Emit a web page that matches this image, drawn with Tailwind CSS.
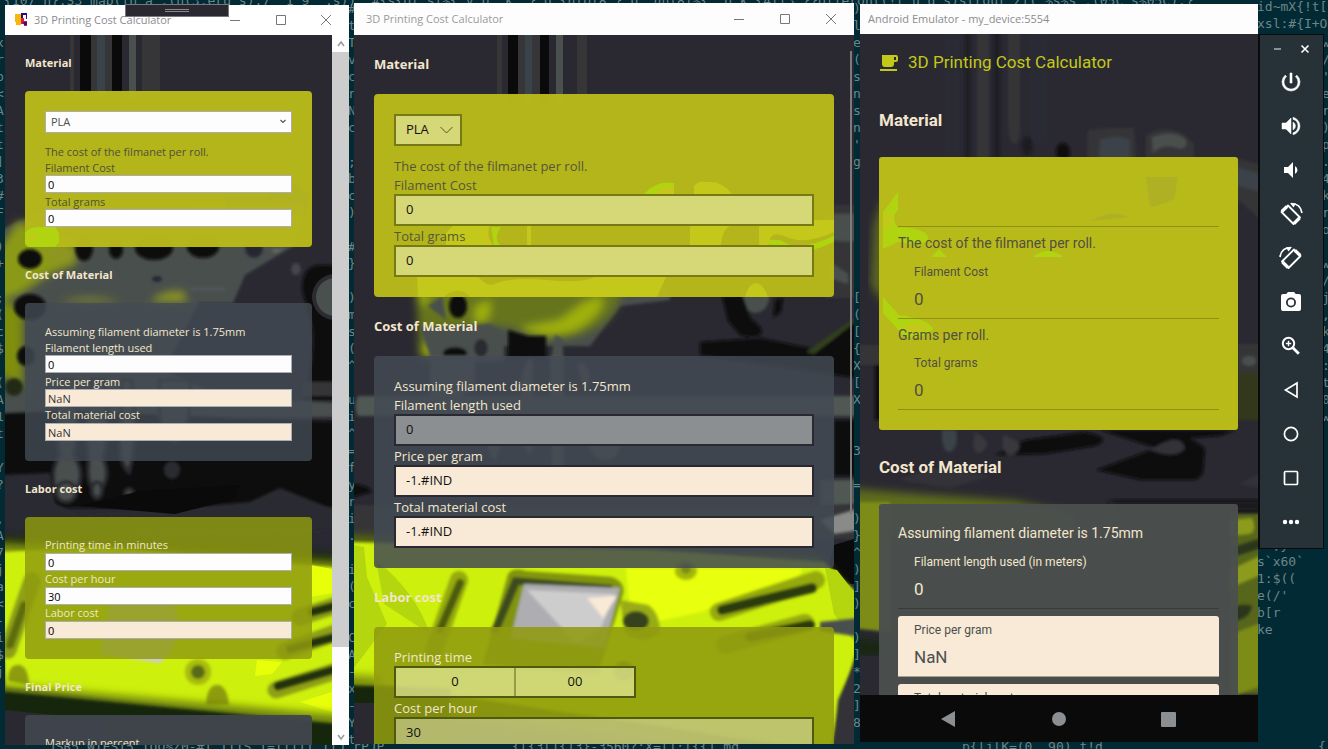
<!DOCTYPE html>
<html lang="en">
<head>
<meta charset="utf-8">
<meta name="viewport" content="width=device-width, initial-scale=1">
<title>3D Printing Cost Calculator</title>
<script src="https://cdn.jsdelivr.net/npm/@tailwindcss/browser@4"></script>
</head>
<body class="bg-[#01252f]">
<div class="relative h-screen w-full overflow-hidden bg-[#012a35] font-['Open_Sans','Noto_Sans',sans-serif]">

  <!-- Terminal text behind the windows -->
  <div aria-hidden="true" class="text-[13px] leading-[17px] text-[#6d8587] [&>pre]:font-['DejaVu_Sans_Mono',monospace]">
    <pre class="absolute -top-2 left-1">{107 n}:S3 map(fn a :(n(3:erd s):7" 1 9 ":s))  #{s{of sf%{ y b  k  } g {nfof8"} b  nnf8f%{  b k {4ff3 }}offeront(!t u d s)strout Zf("%s%s",(05C s%05C):}</pre>
    <pre class="absolute -top-[2px] left-[1257px]">id~mX{!t[
xsl:#{I+O</pre>
    <pre class="absolute top-[34px] -left-1">x
r
b
&lt;
A
t
t
]
3
#
F

)
+

;
(
c
$

(
A
1
t

Y
?

,
A
7
j
a
&lt;
-
i
$
j</pre>
    <pre class="absolute top-0 left-[348px]">#
t
T
v
c
r
N
c

;
b
c
)

#
}

)
m
s
(
^

u
i
^
=
f
y
r
i
.

i
(
c

C
A
-
x
-
Y
t

;
)
^</pre>
    <pre class="absolute top-0 left-[853px]">)
l
e
(
s
n
s
n
'
g







[
(
[
{
X
[
X


3

=

)
}
^
)
]
)

)
]
*
2
]
8</pre>
    <pre class="absolute top-[34px] left-[1322px]">w
/
'
e
r
)
p
.
4
k
r
o

w
/
j
,
k
4
:
t
0
w</pre>
    <pre class="absolute top-[536px] left-[1257px]">  ,y
s`x60`
1:$((
e(/'
b[r
ke</pre>
    <pre class="absolute top-[738px] left-10">.JSR5.WIESI5 TUO%Z0-#I.IIIS I=IIIII.IIJ.rPJP</pre>
    <pre class="absolute top-[738px] left-[512px]">{[{3[]{]3}-3560?:X=[];[{{].md</pre>
    <pre class="absolute top-[738px] left-[962px]">p{[j[K=(0..90).t!d</pre>
    <pre class="absolute top-[738px] left-[1318px]">{</pre>
  </div>

  <!-- Window 1: desktop (WPF) -->
  <section class="absolute top-[5px] left-[5px] flex h-[740px] w-[344px] flex-col bg-white">
    <header class="flex h-[30px] shrink-0 items-center pl-[10px] text-[#8b8b8f]">
      <svg class="mr-[6px] h-[14px] w-[13px]" viewBox="0 0 13 14"><path d="M0 1h6v11H1V9H0z" fill="#f8b70e"/><path d="M6 0h6v6h-1V2H8v3H6z" fill="#2a0a8a"/><path d="M6 5h3v3h3v5H9v-2H6z" fill="#d81b4a"/><path d="M8 9h4v3H9z" fill="#3a1080"/></svg>
      <h1 class="flex-1 text-[11px] whitespace-nowrap">3D Printing Cost Calculator</h1>
      <button aria-label="Minimize" class="grid h-[30px] w-[46px] place-items-center"><svg class="h-3 w-3" viewBox="0 0 12 12" stroke="#777" fill="none"><path d="M1 6.500h10"/></svg></button>
      <button aria-label="Maximize" class="grid h-[30px] w-[45px] place-items-center"><svg class="h-3 w-3" viewBox="0 0 12 12" stroke="#777" fill="none"><path d="M1.500 1.500h9v9h-9z"/></svg></button>
      <button aria-label="Close" class="grid h-[30px] w-[46px] place-items-center"><svg class="h-3 w-3" viewBox="0 0 12 12" stroke="#777" fill="none"><path d="M1 1l10 10M11 1L1 11"/></svg></button>
    </header>
    <div class="absolute -top-px left-[120px] flex h-[13px] w-[104px] flex-col items-center justify-center gap-px border border-[#77777a] bg-[#2a2932]"><span class="h-px w-6 bg-[#8a8a8a]"></span><span class="h-px w-6 bg-[#8a8a8a]"></span></div>
    <div class="flex min-h-0 flex-1">
      <main class="relative min-w-0 flex-1 overflow-hidden bg-[#2a2932]">
        <svg class="absolute inset-0 h-full w-full" viewBox="5 35 327 710" preserveAspectRatio="xMidYMin slice" aria-hidden="true">
          <defs><filter id="b1" x="-20%" y="-20%" width="140%" height="140%"><feGaussianBlur stdDeviation="1.500"/></filter><filter id="b3" x="-20%" y="-50%" width="140%" height="200%"><feGaussianBlur stdDeviation="4"/></filter></defs>
          <path fill="#363638" d="M70 35h4v66h-4zM142 35h18v66h-18zM91 35h21v66H91z"/>
          <path fill="#0a0a0a" d="M80 35h11v56H80zM112 35h10v56h-10z"/>
          <path fill="#3a424a" d="M97 35h8v60h-8z"/><path fill="#4a504d" d="M129 35h7v66h-7z"/>
          <g filter="url(#b1)">
            <path fill="#4a504d" d="M0 230l40-18 265-10-10 43-50 30-12 28H0z"/>
            <path fill="#4a504d" d="M0 300h200l-36 70 60 28 115 5v14H0z"/>
            <path fill="#0a0a0a" d="M0 413l65-3 275 12v86H0z"/>
            <path fill="#0a0a0a" d="M302 290q0-26 20-25h20v135h-38q12-50 8-75z"/>
            <path fill="#363638" d="M302 382h36v14h-36z"/>
          </g>
          <g filter="url(#b3)">
            <path fill="#8b9a12" d="M-5 255l23-34 60 25-2 18-26 10-30 20-25 8z"/>
            <path fill="#7f8e10" d="M-5 295l28 15v78L-5 372z"/>
            <path fill="#8e9624" d="M46 247h30v12q-17 8-30 0zM60 302q30-8 60 0zM150 302q15-14 34-10l3 10z"/>
          </g>
          <g filter="url(#b1)" fill="#0a0a0a">
            <ellipse cx="30" cy="259" rx="12" ry="10"/><ellipse cx="84" cy="248" rx="9" ry="13"/><ellipse cx="116" cy="249" rx="7" ry="10"/><ellipse cx="154" cy="248" rx="19" ry="12"/><ellipse cx="203" cy="247" rx="16" ry="11"/><ellipse cx="254" cy="248" rx="9" ry="10" fill="#262831"/>
            <ellipse cx="30" cy="307" rx="16" ry="13"/><ellipse cx="26" cy="356" rx="9" ry="10"/>
            <ellipse cx="14" cy="387" rx="9" ry="9" fill="#242a18"/>
            <ellipse cx="157" cy="279" rx="5" ry="3" fill="#262831"/><ellipse cx="296" cy="269" rx="5" ry="6" fill="#45454b"/>
            <path fill="#6a6a6c" d="M270 250l14-2-8 5z"/><path fill="#525a63" d="M190 288h35v2h-35z"/>
          </g>
          <circle cx="335" cy="297" r="23" fill="#2c2b32"/><circle cx="335" cy="297" r="19" fill="#4a504d"/>
          <g filter="url(#b1)" fill="#4a504d" stroke="#2c2b32" stroke-width="4">
            <path d="M60 380h15q5 50-2 75 12 15 5 32-10 22-22 5-7-20 4-37-7-30 0-75zM92 380h12q6 50-1 78 9 20-4 33-14-2-10-33-5-30 3-78zM122 380h10q6 60-3 92-10-10-9-30zM160 380h30q2 50-15 62-20-10-15-62z"/>
            <ellipse cx="172" cy="470" rx="6" ry="7" fill="#2c2b32"/><circle cx="129" cy="493" r="4"/><circle cx="66" cy="492" r="10"/><ellipse cx="97" cy="490" rx="5" ry="8"/>
          </g>
          <path filter="url(#b1)" fill="#2c2b32" d="M0 475l50-2 5 30 25 14 170-15 30-14 55 22v20l-335 10z"/><path fill="#0a0a0a" d="M80 506l60-15 100-6-5 14-60 15z"/>
          <path filter="url(#b3)" fill="#1a2a0c" d="M-8 536l350 18v20L-8 552z"/>
          <path filter="url(#b3)" fill="#7f930e" d="M-8 542l350 20v40L-8 562z"/>
          <path filter="url(#b1)" fill="#cdf00a" d="M0 552l100-5 240 21v156L5 688z"/>
          <path fill="#e8ff0a" d="M310 565l22 4v24l-22 4zM257 660l25 2-10 12-17 2zM300 702l32-10v20z"/>
          <g filter="url(#b1)">
            <path fill="#cdcdcd" d="M110 600h60q15 20 2 50l-12 13-60-9z"/>
            <path fill="none" stroke="#8fa016" stroke-width="17" stroke-linecap="round" d="M32 581L8 650M300 617l40-13M285 651l50-18M276 690l60-19"/>
            <path fill="none" stroke="#20300f" stroke-width="9" stroke-linecap="round" d="M312 612l30-8M290 649l45-12M278 686l55-16"/>
            <path fill="none" stroke="#5c6d10" stroke-width="8" stroke-linecap="round" d="M24 605L10 645"/>
            <circle cx="198" cy="672" r="13" fill="#a8bc0e"/><circle cx="198" cy="672" r="7" fill="#586a18"/>
            <path fill="#8c9c10" d="M206 705q1-20 11-20t12 20zM8 681q0-16 10-16t11 20z"/>
          </g>
          <path filter="url(#b3)" fill="#70840d" d="M-8 684l350 31v15H-8z"/>
          <path filter="url(#b1)" fill="#17260c" d="M0 691l340 33v30H0z"/>
          <path fill="#2a2932" d="M5 710l100 10v30H5z"/>
        </svg>
        <form class="relative px-5 text-[11px] text-[#f3e6cd]">
          <h2 class="flex h-14 items-center font-bold">Material</h2>
          <div class="relative isolate flex flex-col rounded-[4px] bg-[#b8ba1a]/97 p-5 text-[#505039]">
            <svg class="absolute bottom-0 left-0 -z-10 h-20 w-full" viewBox="0 0 287 80" preserveAspectRatio="none" aria-hidden="true"><path fill="#b0d40f" d="M0 66q4-6 14-6h16q5 4 4 15l-4 5H4l-4-4z"/><path fill="#c3c81a" d="M4 70q5-4 8 0-3 6-8 5z"/><path fill="#afb024" d="M200 30h40q30-25 45 0l-5 18h-80z" opacity=".5"/></svg>
            <div class="relative mb-[10px]">
              <select aria-label="Material" class="block h-[22px] w-full appearance-none border border-[#abadb3] bg-[#fdfdfd] px-[5px] text-[#4a504d]"><option>PLA</option></select>
              <svg class="absolute top-[8px] right-[6px] h-[5px] w-[6px]" viewBox="0 0 6 5" fill="none" stroke="#555" stroke-width="1.200"><path d="M.500 1L3 3.500 5.500 1"/></svg>
            </div>
            <p class="h-4 leading-[18px]">The cost of the filmanet per roll.</p>
            <label for="a1" class="h-4 leading-[18px]">Filament Cost</label>
            <input id="a1" value="0" class="h-[18px] w-full border border-[#abadb3] bg-[#fdfdfd] px-[2px] text-black">
            <label for="a2" class="h-4 leading-[18px]">Total grams</label>
            <input id="a2" value="0" class="h-[18px] w-full border border-[#abadb3] bg-[#fdfdfd] px-[2px] text-black">
          </div>
          <h2 class="flex h-14 items-center font-bold">Cost of Material</h2>
          <div class="flex flex-col rounded-[4px] bg-[#444b54]/80 p-5">
            <p class="h-4 leading-[18px]">Assuming filament diameter is 1.75mm</p>
            <label for="a3" class="h-4 leading-[18px]">Filament length used</label>
            <input id="a3" value="0" class="h-[18px] w-full border border-[#abadb3] bg-[#fdfdfd] px-[2px] text-black">
            <label for="a4" class="h-4 leading-[18px]">Price per gram</label>
            <input id="a4" value="NaN" readonly class="h-[18px] w-full border border-[#abadb3] bg-[#f9e9d7] px-[2px] text-[#333]">
            <label for="a5" class="h-4 leading-4">Total material cost</label>
            <input id="a5" value="NaN" readonly class="h-[18px] w-full border border-[#abadb3] bg-[#f9e9d7] px-[2px] text-[#333]">
          </div>
          <h2 class="flex h-14 items-center font-bold">Labor cost</h2>
          <div class="flex flex-col rounded-[4px] bg-[#8f9b10]/84 p-5">
            <label for="a6" class="h-4 leading-4">Printing time in minutes</label>
            <input id="a6" value="0" class="h-[18px] w-full border border-[#abadb3] bg-[#fdfdfd] px-[2px] text-black">
            <label for="a7" class="h-4 leading-4">Cost per hour</label>
            <input id="a7" value="30" class="h-[18px] w-full border border-[#abadb3] bg-[#fdfdfd] px-[2px] text-black">
            <label for="a8" class="h-4 leading-4">Labor cost</label>
            <input id="a8" value="0" readonly class="h-[18px] w-full border border-[#abadb3] bg-[#f9e9d7] px-[2px] text-black">
          </div>
          <h2 class="flex h-14 items-center font-bold">Final Price</h2>
          <div class="flex flex-col rounded-[4px] bg-[#40464e]/95 p-5">
            <label for="a9" class="h-4 leading-4">Markup in percent</label>
            <input id="a9" value="0" class="h-[18px] w-full border border-[#abadb3] bg-[#fdfdfd] px-[2px] text-black">
          </div>
        </form>
      </main>
      <div aria-hidden="true" class="flex w-[17px] flex-col items-center bg-[#fdfdfd]">
        <svg class="h-[17px] w-[8px]" viewBox="0 0 8 17" fill="none" stroke="#999" stroke-width="1.500"><path d="M1 11l3-4 3 4"/></svg>
        <div class="h-[595px] w-full bg-[#cdcdcd]"></div><div class="flex-1"></div>
        <svg class="h-[17px] w-[8px]" viewBox="0 0 8 17" fill="none" stroke="#999" stroke-width="1.500"><path d="M1 7l3 4 3-4"/></svg>
      </div>
    </div>
  </section>

  <!-- Window 2: desktop (UWP) -->
  <section class="absolute top-[3px] left-[354px] flex h-[741px] w-[500px] flex-col bg-[#2a2932] text-[13px]">
    <header class="flex h-8 shrink-0 items-center bg-[#fdfdfd] pl-3 text-[#9a9a9a]">
      <h1 class="flex-1 text-[11px]">3D Printing Cost Calculator</h1>
      <button aria-label="Minimize" class="grid h-8 w-[46px] place-items-center"><svg class="h-3 w-3" viewBox="0 0 12 12" stroke="#777" fill="none"><path d="M1 6.500h10"/></svg></button>
      <button aria-label="Maximize" class="grid h-8 w-[46px] place-items-center"><svg class="h-3 w-3" viewBox="0 0 12 12" stroke="#777" fill="none"><path d="M1.500 1.500h9v9h-9z"/></svg></button>
      <button aria-label="Close" class="grid h-8 w-[46px] place-items-center"><svg class="h-3 w-3" viewBox="0 0 12 12" stroke="#777" fill="none"><path d="M1 1l10 10M11 1L1 11"/></svg></button>
    </header>
    <main class="relative min-h-0 flex-1 overflow-hidden">
      <svg class="absolute inset-0 h-full w-full" viewBox="354 35 500 709" preserveAspectRatio="xMidYMin slice" aria-hidden="true">
        <path fill="#363638" d="M497 35h5v66h-5zM577 35h10v66h-10zM518 35h22v66h-22z"/>
        <path fill="#0a0a0a" d="M508 35h10v66h-10zM540 35h9v66h-9z"/><path fill="#3a424a" d="M525 35h7v66h-7z"/><path fill="#4a504d" d="M556 35h7v66h-7z"/>
        <g filter="url(#b1)">
          <path fill="#363638" d="M825 205h35v93h-35z"/><path fill="#4a504d" d="M828 214h35v24q-15 7-35 0zM830 262l18 12v10l-18-6z"/>
          <path fill="#4a504d" d="M440 290h230v10l-50 6-30 40H440z"/>
        </g>
        <g filter="url(#b3)">
          <path fill="#66741a" d="M416 280h210l-10 28q-15 24-50 30-30 2-48-8-30-8-50-2l-35 2 5 28h-18z"/>
          <path fill="#9fb00c" d="M520 328l40-8 24-18 18-6q5 16-25 34-35 12-57-2zM475 306l16-6-2 18-14 8zM416 294h14l-6 14zM422 345l16-2-2 13h-12z"/>
        </g>
        <g filter="url(#b1)" fill="#0a0a0a">
          <path fill="#4a504d" d="M420 328l70-4 14 8v30h-72zM555 335l8 4v20h-12zM740 290h30q0 22-15 23-13-2-15-23zM428 306l14-10 4 24z"/>
          <ellipse cx="458" cy="306" rx="9" ry="12"/><ellipse cx="455" cy="353" rx="12" ry="6"/><path d="M508 330l20 6h18v22h-38zM722 296l20-2 9 25q15 10 9 16-6 4-20 0l-12-14zM775 300l8-2-2 14-8 6zM700 342l60-4 50 10 20-6 32-28v65l-162-24zM834 420h28v56h-28z"/>
          <path fill="#33401a" d="M806 352l52-36v4l-44 34z"/>
          <ellipse cx="481" cy="348" rx="7" ry="9" fill="#2c2b32"/>
          <path fill="#505853" d="M358 396h504v20H358q-5-10 0-20zM430 356h45v30q-20 20-45 10zM521 380q5-25 12-20v90q-4 10-12-10zM550 356h14v120h-12zM578 362q16 4 10 26-8-2-10-26zM487 420h15q0 30-7 40-10-4-8-40zM588 440h32q0 22-15 20-14 0-17-20zM820 480h40v24l-40 4z"/>
          <path d="M350 484q18 0 22 8l-22 6z"/>
        </g>
        <path filter="url(#b1)" fill="#363638" d="M350 505h512v34H350z"/><path filter="url(#b1)" fill="#8a8a88" d="M820 520l40-12v22l-26 4z"/>
        <path fill="#0a0a0a" d="M834 545l20-6v45h-30z"/>
        <path filter="url(#b3)" fill="#58680f" d="M344 535l164 5 310 16 48 54-22 130-150 10-350-50z"/>
        <path filter="url(#b1)" fill="#cdf00a" d="M350 542l304 8 170 12 32 30v60l-26 100-480-72z"/>
        <path fill="#b4d60e" d="M354 545l10 2 3 30 20 47-33 44zM376 560q40 32 54 74l-46-30zM825 568l12 2 17 22v50l-20-28z"/>
        <path filter="url(#b1)" fill="#e8ff0a" d="M626 568h175q6 14-40 22l-60 22-70 15z"/>
        <g filter="url(#b1)">
          <path fill="none" stroke="#96aa10" stroke-width="18" stroke-linecap="round" d="M459 580l-25 70M719 612l97-32M725 645l80-22"/>
          <path fill="none" stroke="#2b3a10" stroke-width="10" stroke-linecap="round" d="M722 610l90-22M750 637l60-12"/>
          <path fill="none" stroke="#4c5c10" stroke-width="8" stroke-linecap="round" d="M460 583l-20 47"/>
          <path fill="#82940f" d="M508 574q5-7 18-3l86 6q14 5 11 17l-25 80-115-10z"/>
          <path fill="#3e4c1a" d="M513 577l100 8-4 8-90-8-20 47-9 1z"/>
          <path fill="#aeaeb2" d="M524 584l96 4-16 60-93-10z"/>
          <path fill="#cdcdcd" d="M527 590l88 4-14 34-25 15z"/><path fill="#f9e9d7" d="M587 598l30-2-14 22z"/>
          <path fill="#99ac12" d="M620 600l28 5q12 8 12 28-20 14-35 0z"/><ellipse cx="636" cy="621" rx="13" ry="10" fill="#34431c"/>
          <ellipse cx="686" cy="571" rx="11" ry="9" fill="#a4b80e"/><ellipse cx="686" cy="569" rx="5" ry="5" fill="#7c8c14"/>
          <ellipse cx="624" cy="671" rx="10" ry="10" fill="#6c7c14"/>
          <path fill="#4a504d" d="M820 622l40-4v19l-40-6z"/><path fill="#303038" d="M838 700l24-55v110h-30z"/>
        </g>
        <path filter="url(#b3)" fill="#82960d" d="M340 674l40 2v20h-40z"/><path filter="url(#b1)" fill="#17260c" d="M346 685l104 4v80H346z"/><path fill="#2a2932" d="M354 703h22v45h-22z"/>
      </svg>
      <form class="relative px-5 text-[#f3e6cd]">
        <h2 class="flex h-[59px] items-center font-bold">Material</h2>
        <div class="relative isolate flex flex-col rounded-[4px] bg-[#b8ba1a]/97 p-5 text-[#55563a]">
          <svg class="absolute bottom-0 left-0 -z-10 h-[120px] w-full" viewBox="0 0 460 120" preserveAspectRatio="none" aria-hidden="true"><path fill="#b0d40f" d="M270 17q12-14 30-11v12zM385 64q20-3 25 1 15 10 50-6v6q-40 18-55 5zM117 50h10q-8 12-1 18h-6z"/><path fill="#c3c81a" d="M72 56q8-10 15-10h30q-6 12 2 22h34V48h4v20H72zM280 17q8-10 20-8v8zM320 17V9q5-6 12-4 15-2 26 12zM316 46h46q-14 4-15 22h-31zM385 43h75v12q-30 14-50 4-15-6-15 9h-10zM43 98h60q10 14 20 8 15-6 50-3 40 4 50-5h70l-10 22H44zM371 120q4-14 11-14t12 14z"/><path fill="#b8ba1a" d="M70 120q10-10 22-4l4 4z"/></svg>
          <div class="relative mb-[10px] w-[68px]">
            <select aria-label="Material" class="block h-8 w-full appearance-none border-2 border-[#757b14] bg-[#d6d776] px-[10px] text-[#111]"><option>PLA</option></select>
            <svg class="absolute top-3 right-[9px] h-2 w-[13px]" viewBox="0 0 13 8" fill="none" stroke="#55581c" stroke-width="1"><path d="M.500 1l6 6 6-6"/></svg>
          </div>
          <p class="h-[19px] leading-[21px]">The cost of the filmanet per roll.</p>
          <label for="b1i" class="h-[19px] leading-[21px]">Filament Cost</label>
          <input id="b1i" value="0" class="h-8 w-full border-2 border-[#757b14] bg-[#d6d776] px-[10px] pb-[2px] text-[#111]">
          <label for="b2i" class="h-[19px] leading-[21px]">Total grams</label>
          <input id="b2i" value="0" class="h-8 w-full border-2 border-[#757b14] bg-[#d6d776] px-[10px] pb-[2px] text-[#111]">
        </div>
        <h2 class="flex h-[59px] items-center font-bold">Cost of Material</h2>
        <div class="flex flex-col rounded-[4px] bg-[#434a53]/85 p-5">
          <p class="h-[19px] leading-[21px]">Assuming filament diameter is 1.75mm</p>
          <label for="b3i" class="h-[19px] leading-[21px]">Filament length used</label>
          <input id="b3i" value="0" class="h-8 w-full border-2 border-[#2a2932] bg-[#8b8f92] px-[10px] pb-[2px] text-[#111]">
          <label for="b4i" class="h-[19px] leading-[21px]">Price per gram</label>
          <input id="b4i" value="-1.#IND" readonly class="h-8 w-full border-2 border-[#2a2932] bg-[#f9e9d7] px-[10px] pb-[2px] text-[#111]">
          <label for="b5i" class="h-[19px] leading-[21px]">Total material cost</label>
          <input id="b5i" value="-1.#IND" readonly class="h-8 w-full border-2 border-[#2a2932] bg-[#f9e9d7] px-[10px] pb-[2px] text-[#111]">
        </div>
        <h2 class="flex h-[59px] items-center font-bold">Labor cost</h2>
        <div class="flex flex-col rounded-[4px] bg-[#8f9b10]/88 p-5">
          <label for="b6i" class="h-[19px] leading-[21px]">Printing time</label>
          <div class="flex h-8 w-[242px] border-2 border-[#4f5a10] bg-[#fdfdc8]/55 text-[#111]">
            <input id="b6i" value="0" aria-label="Hours" class="min-w-0 flex-1 border-r-2 border-[#969b48] text-center">
            <input value="00" aria-label="Minutes" class="min-w-0 flex-1 text-center">
          </div>
          <label for="b7i" class="h-[19px] leading-[21px]">Cost per hour</label>
          <input id="b7i" value="30" class="h-8 w-full border-2 border-[#4f5a10] bg-[#dcdcb8]/55 px-[10px] pb-[2px] text-[#111]">
        </div>
      </form>
      <div aria-hidden="true" class="absolute top-4 right-[2px] h-[463px] w-[2px] bg-[#7d7c7a]"></div>
    </main>
  </section>

  <!-- Window 3: Android emulator -->
  <section class="absolute top-[4px] left-[860px] flex h-[738px] w-[398px] flex-col bg-[#2a2932]">
    <header class="flex h-[30px] shrink-0 items-center bg-[#fdfdfd] pl-2 text-[11px] text-[#8b8b8f]">Android Emulator - my_device:5554</header>
    <main class="relative min-h-0 flex-1 overflow-hidden font-[Roboto,sans-serif]">
      <svg class="absolute inset-0 h-full w-full" viewBox="860 34 398 661" preserveAspectRatio="xMidYMin slice" aria-hidden="true">
        <g filter="url(#b1)">
          <path fill="#2b2c36" d="M946 24h12v140h-12zM1030 24h16v120h-16z"/><path fill="#1d1d22" d="M965 24h5v140h-5zM994 24h6v150h-6z"/>
          <path fill="#363638" d="M977 24h12v150h-12zM1008 24h12v100q0 20-6 20-6-5-6-20zM1088 130l20-2h25q5 20 0 44h-46z"/>
          <path fill="#3a424a" d="M1100 140q20-6 30 0v35h-32z"/><path fill="#363638" d="M1146 135q30-14 48 10v25h-48z"/><path fill="#4a504d" d="M1152 137q24-8 34 3 2 10-8 8-16-5-25 5z"/>
          <ellipse cx="1027" cy="146" rx="6" ry="10" fill="#1d1d22"/><ellipse cx="1063" cy="152" rx="7" ry="9" fill="#0a0a0a"/>
          <path fill="#363638" d="M1232 158l36 8v60l-36-32z"/><path fill="#3a424a" d="M1232 166l36 10v18l-36-10z"/>
          <path fill="#363638" d="M850 345h40v20h-40zM1238 344h30v28h-30z"/><ellipse cx="1249" cy="361" rx="7" ry="5" fill="#4a504d"/>
          <path fill="#0a0a0a" d="M875 365h20v55h-20zM995 455l30-15 60-8q30 6 10 14l-50 8zM1100 430h135l-15 6-30 2 15 10-2 25q-5 8-12 7h-50l-45-10 60-22z"/>
          <path fill="#3a424a" d="M942 430h14q3 20-7 22-8-2-7-22z"/><path fill="#38383c" d="M975 432q12 6 12 14-10 14-14 0zM1003 435q20 6 16 14-10 14-16-2z"/>
          <path fill="#33391c" d="M1238 372h24v48h-24z"/><path fill="#333339" d="M900 480l30-12 60 8-40 12zM1150 450q30-20 35-2-8 12-35 2zM1240 484l22-12v16z"/>
        </g>
        <path filter="url(#b3)" fill="#5b6820" d="M884 195l-10 30-3 60 14 20v-100z"/>
        <path filter="url(#b3)" fill="#5d6c1c" d="M845 488l60 5 110 8 60 14v20H845z"/>
        <path filter="url(#b1)" fill="#7b8c14" d="M850 502h40v130l-40-4z"/><path filter="url(#b3)" fill="#17260c" d="M845 636l50 8v14l-50-5z"/>
        <path filter="url(#b3)" fill="#0a0a0a" d="M1110 502h158v8h-158z"/>
        <path filter="url(#b1)" fill="#59661c" d="M1230 514h38v180h-38z"/>
        <g filter="url(#b1)"><path fill="#8c9b1a" d="M1230 520l22-2q6 12-2 16l-20 2zM1230 570l38-18v20l-38 16z"/><path fill="#2c341c" d="M1230 548l38-12v10l-38 12zM1230 610q10-8 22-4-2 14-22 16z"/><path fill="#7b8c14" d="M1232 634l36-14v64l-36 12z"/></g>
        <path fill="#2a2932" d="M860 656h30v40h-30z"/>
      </svg>
      <div class="relative pr-5 pl-[19px] text-[#f3e6cd]">
        <div class="flex h-[49px] items-center gap-[9px] pt-2 text-[#c3c81a]">
          <svg class="h-5 w-5" viewBox="0 0 20 20" fill="currentColor"><path d="M3 2h14q2 0 2 2v3q0 2-2 2h-2v2q0 3-3 3H6q-3 0-3-3zm12 2v3h2V4zM1 16h17v2H1z" fill-rule="evenodd"/></svg>
          <h1 class="text-[17px]">3D Printing Cost Calculator</h1>
        </div>
        <h2 class="flex h-[74px] items-center pt-px text-[17px] font-bold">Material</h2>
        <div class="relative isolate rounded-[3px] bg-[#b8ba1a] px-[19px] py-5 text-[14px] text-[#505040]">
          <svg class="absolute top-0 left-0 -z-10 h-[200px] w-full" viewBox="0 0 359 200" preserveAspectRatio="none" aria-hidden="true"><path fill="#b0d40f" d="M4 55L19 35v18q-8 8 0 18 10-2 20 2 12 2 10 12l-20 2q-10-4-14 0L4 92zM52 100l8-8 8 8zM154 100q15-12 30 0zM4 140l16 18q30 4 34 14-16 14-30 6L4 156z"/><path fill="#c3c81a" d="M6 56q8 0 8 6-2 8-9 10zM24 170q20-8 26 0-8 8-20 6z"/><path fill="#afb024" d="M267 20h32l-4 22q-12 6-24 8zM212 64q20-12 38-4z"/></svg>
          <select aria-label="Material" class="block h-[50px] w-full appearance-none border-b border-[#8e9014]"><option></option></select>
          <p class="flex h-[31px] items-center pt-px">The cost of the filmanet per roll.</p>
          <div class="flex h-[61px] flex-col border-b border-[#8e9014] px-4 pt-[6px]">
            <label for="c1" class="h-4 text-[12px] leading-4">Filament Cost</label>
            <input id="c1" value="0" class="mt-2 h-6 w-full text-[17px]">
          </div>
          <p class="flex h-[30px] items-center pt-[2px]">Grams per roll.</p>
          <div class="flex h-[61px] flex-col border-b border-[#8e9014] px-4 pt-[6px]">
            <label for="c2" class="h-4 text-[12px] leading-4">Total grams</label>
            <input id="c2" value="0" class="mt-2 h-6 w-full text-[17px]">
          </div>
        </div>
        <h2 class="flex h-[74px] items-center pt-px text-[17px] font-bold">Cost of Material</h2>
        <div class="rounded-[3px] bg-[#4a504d]/97 px-[19px] pt-[14px] pb-5 text-[14px]">
          <p class="flex h-[30px] items-center">Assuming filament diameter is 1.75mm</p>
          <div class="flex h-[61px] flex-col border-b border-[#383b3b] px-4 pt-[6px]">
            <label for="c3" class="h-4 text-[12px] leading-4">Filament length used (in meters)</label>
            <input id="c3" value="0" class="mt-2 h-6 w-full text-[17px]">
          </div>
          <div class="mt-[7px] flex h-[61px] flex-col rounded-t-[3px] border-b border-[#a8a090] bg-[#f9e9d7] px-4 pt-[6px] text-[#4a504d]">
            <label for="c4" class="h-4 text-[12px] leading-4">Price per gram</label>
            <input id="c4" value="NaN" readonly class="mt-2 h-6 w-full text-[17px]">
          </div>
          <div class="mt-[7px] flex h-[61px] flex-col rounded-t-[3px] border-b border-[#a8a090] bg-[#f9e9d7] px-4 pt-[6px] text-[#4a504d]">
            <label for="c5" class="h-4 text-[12px] leading-4">Total material cost</label>
            <input id="c5" value="NaN" readonly class="mt-2 h-6 w-full text-[17px]">
          </div>
        </div>
      </div>
    </main>
    <nav class="flex h-[47px] shrink-0 items-center justify-center gap-[94px] bg-[#0a0a0a] text-[#8b8f92]">
      <button aria-label="Back"><svg class="h-4 w-4" viewBox="0 0 16 16" fill="currentColor"><path d="M14 0v16L0 8z"/></svg></button>
      <button aria-label="Home"><svg class="h-4 w-4" viewBox="0 0 16 16" fill="currentColor"><circle cx="8" cy="8" r="7"/></svg></button>
      <button aria-label="Overview"><svg class="h-4 w-4" viewBox="0 0 16 16" fill="currentColor"><rect x="0" y="1" width="15" height="15" rx="1"/></svg></button>
    </nav>
  </section>

  <!-- Emulator toolbar -->
  <aside class="absolute top-[34px] left-[1258px] flex w-[66px] flex-col border border-l-2 border-[#0a0a0a] bg-[#263238] pb-[4px] text-white">
    <div class="flex h-[25px] items-center justify-between px-[12px] pt-[4px]">
      <button aria-label="Minimize"><svg class="h-3 w-3" viewBox="0 0 12 12"><path d="M2 5h7" stroke="#8b8f92" stroke-width="2"/></svg></button>
      <button aria-label="Close"><svg class="h-3 w-3" viewBox="0 0 12 12"><path d="M2.500 1.500l7 7M9.500 1.500l-7 7" stroke="#fff" stroke-width="1.600"/></svg></button>
    </div>
    <button aria-label="Power" class="grid h-11 place-items-center pr-[2px]"><svg class="h-6 w-6" viewBox="0 0 24 24" fill="currentColor"><path d="M13 3h-2v10h2zm4.830 2.170l-1.420 1.420A6.920 6.920 0 0 1 19 12a7 7 0 1 1-11.420-5.420L6.170 5.170A9 9 0 1 0 17.830 5.170z" stroke="currentColor" stroke-width=".6"/></svg></button>
    <button aria-label="Volume up" class="grid h-11 place-items-center pr-[2px]"><svg class="h-6 w-6" viewBox="0 0 24 24" fill="currentColor" stroke="currentColor" stroke-width=".5"><path d="M3 9v6h4l5 5V4L7 9zm13.500 3A4.500 4.500 0 0 0 14 7.970v8.050A4.470 4.470 0 0 0 16.500 12zM14 3.230v2.060a7 7 0 0 1 0 13.420v2.060a9 9 0 0 0 0-17.540z"/></svg></button>
    <button aria-label="Volume down" class="grid h-11 place-items-center pr-[2px]"><svg class="h-6 w-6" viewBox="0 0 24 24" fill="currentColor"><path d="M18.500 12A4.500 4.500 0 0 0 16 7.970v8.050A4.470 4.470 0 0 0 18.500 12zM5 9v6h4l5 5V4L9 9z"/></svg></button>
    <button aria-label="Rotate left" class="grid h-11 place-items-center pr-[2px]"><svg class="h-6 w-6" viewBox="0 0 24 24" fill="none" stroke="currentColor"><path stroke-width="1.800" stroke-linejoin="round" d="M9 3.500L2.500 10 14.500 22l6.500-6.500z"/><path stroke-width="3.200" d="M2.800 9.500L8 4.500M15 21.500l5.500-5.500"/><path stroke-width="1.700" d="M12 1.500q9.500 0 11 9.500"/><path fill="currentColor" stroke="none" d="M11 1l6 .500-2.500 4z"/></svg></button>
    <button aria-label="Rotate right" class="grid h-11 place-items-center pr-[2px]"><svg class="h-6 w-6" viewBox="0 0 24 24" fill="none" stroke="currentColor"><path stroke-width="1.800" stroke-linejoin="round" d="M15 3.500l6.500 6.500L9.500 22 3 15.500z"/><path stroke-width="3.200" d="M21.200 9.500L16 4.500M9 21.500L3.500 16"/><path stroke-width="1.700" d="M12 1.500q-9.500 0-11 9.500"/><path fill="currentColor" stroke="none" d="M13 1l-6 .500 2.500 4z"/></svg></button>
    <button aria-label="Take screenshot" class="grid h-11 place-items-center pr-[2px]"><svg class="h-6 w-6" viewBox="0 0 24 24" fill="currentColor"><path fill-rule="evenodd" d="M9 2L7.200 4H4a2 2 0 0 0-2 2v13q0 2 2 2h16q2 0 2-2V6a2 2 0 0 0-2-2h-3.200L15 2zm3 5.500a5 5 0 1 1 0 10 5 5 0 0 1 0-10zm0 1.800a3.200 3.200 0 1 0 0 6.400 3.200 3.200 0 0 0 0-6.400z"/></svg></button>
    <button aria-label="Zoom" class="grid h-11 place-items-center pr-[2px]"><svg class="h-6 w-6" viewBox="0 0 24 24" fill="none" stroke="currentColor"><circle cx="9.500" cy="9.500" r="5.700" stroke-width="2"/><path stroke-width="1.400" d="M9.500 6.800v5.400M6.800 9.500h5.400"/><path stroke-width="2.800" d="M13.800 13.800l6 6"/></svg></button>
    <button aria-label="Back" class="grid h-11 place-items-center pr-[2px]"><svg class="h-6 w-6" viewBox="0 0 24 24" fill="none" stroke="currentColor" stroke-width="1.700"><path d="M18 5v14L6.500 12z"/></svg></button>
    <button aria-label="Home" class="grid h-11 place-items-center pr-[2px]"><svg class="h-6 w-6" viewBox="0 0 24 24" fill="none" stroke="currentColor" stroke-width="1.700"><circle cx="12" cy="12" r="6.600"/></svg></button>
    <button aria-label="Overview" class="grid h-11 place-items-center pr-[2px]"><svg class="h-6 w-6" viewBox="0 0 24 24" fill="none" stroke="currentColor" stroke-width="1.700"><rect x="5.500" y="5.500" width="13" height="13" rx="1"/></svg></button>
    <button aria-label="More" class="grid h-11 place-items-center pr-[2px]"><svg class="h-6 w-6" viewBox="0 0 24 24" fill="currentColor"><circle cx="6" cy="12" r="2.200"/><circle cx="12" cy="12" r="2.200"/><circle cx="18" cy="12" r="2.200"/></svg></button>
  </aside>
</div>
</body>
</html>
